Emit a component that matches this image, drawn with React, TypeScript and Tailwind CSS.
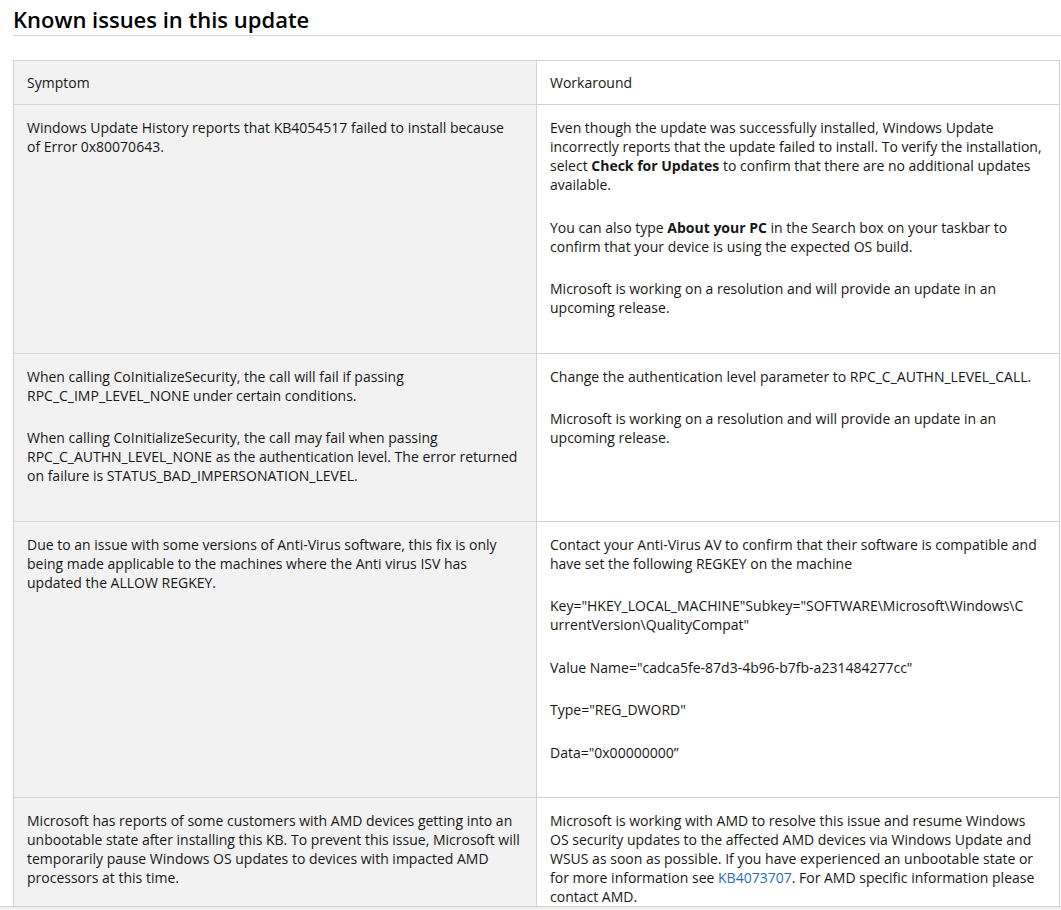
import React from 'react';

type Row = {
  symptom: React.ReactNode[];
  workaround: React.ReactNode[];
};

const rows: Row[] = [
  {
    symptom: [
      <>Windows Update History reports that KB4054517 failed to install because<br />of Error 0x80070643.</>,
    ],
    workaround: [
      <>
        Even though the update was successfully installed, Windows Update<br />
        incorrectly reports that the update failed to install. To verify the installation,<br />
        select <b className="font-bold">Check for Updates</b> to confirm that there are no additional updates<br />
        available.
      </>,
      <>
        You can also type <b className="font-bold">About your PC</b> in the Search box on your taskbar to<br />
        confirm that your device is using the expected OS build.
      </>,
      <>Microsoft is working on a resolution and will provide an update in an<br />upcoming release.</>,
    ],
  },
  {
    symptom: [
      <>When calling CoInitializeSecurity, the call will fail if passing<br />RPC_C_IMP_LEVEL_NONE under certain conditions.</>,
      <>
        When calling CoInitializeSecurity, the call may fail when passing<br />
        RPC_C_AUTHN_LEVEL_NONE as the authentication level. The error returned<br />
        on failure is STATUS_BAD_IMPERSONATION_LEVEL.
      </>,
    ],
    workaround: [
      <>Change the authentication level parameter to RPC_C_AUTHN_LEVEL_CALL.</>,
      <>Microsoft is working on a resolution and will provide an update in an<br />upcoming release.</>,
    ],
  },
  {
    symptom: [
      <>
        Due to an issue with some versions of Anti-Virus software, this fix is only<br />
        being made applicable to the machines where the Anti virus ISV has<br />
        updated the ALLOW REGKEY.
      </>,
    ],
    workaround: [
      <>Contact your Anti-Virus AV to confirm that their software is compatible and<br />have set the following REGKEY on the machine</>,
      <>Key="HKEY_LOCAL_MACHINE"Subkey="SOFTWARE\Microsoft\Windows\C<br />urrentVersion\QualityCompat"</>,
      <>Value Name="cadca5fe-87d3-4b96-b7fb-a231484277cc"</>,
      <>Type="REG_DWORD"</>,
      <>Data="0x00000000”</>,
    ],
  },
  {
    symptom: [
      <>
        Microsoft has reports of some customers with AMD devices getting into an<br />
        unbootable state after installing this KB. To prevent this issue, Microsoft will<br />
        temporarily pause Windows OS updates to devices with impacted AMD<br />
        processors at this time.
      </>,
    ],
    workaround: [
      <>
        Microsoft is working with AMD to resolve this issue and resume Windows<br />
        OS security updates to the affected AMD devices via Windows Update and<br />
        WSUS as soon as possible. If you have experienced an unbootable state or<br />
        for more information see <a href="#" className="text-[#2a6ebb]">KB4073707</a>. For AMD specific information please<br />
        contact AMD.
      </>,
    ],
  },
];

const Cell: React.FC<{ paras: React.ReactNode[]; shaded?: boolean }> = ({ paras, shaded }) => (
  <td className={`border border-[#d2d2d2] align-top pl-[13px] pr-[12px] pt-[13px] pb-[12px] ${shaded ? 'bg-[#f2f2f2]' : 'bg-white'}`}>
    {paras.map((p, i) => (
      <p key={i} className="mb-[23.5px] whitespace-nowrap">
        {p}
      </p>
    ))}
  </td>
);

export default function App() {
  return (
    <div
      className="h-[910px] flex flex-col bg-white text-[#171717] overflow-hidden"
      style={{ fontFamily: '"Open Sans", "Noto Sans", sans-serif' }}
    >
      <div className="flex-1 overflow-hidden pl-[13px]">
        <h2 className="text-[22px] font-semibold leading-[32px] pt-[3px] border-b border-[#d6d6d6] text-black">
          Known issues in this update
        </h2>
        <table className="mt-[24px] w-[1046px] table-fixed border-collapse text-[14px] leading-[19px]">
          <colgroup>
            <col className="w-[523px]" />
            <col className="w-[523px]" />
          </colgroup>
          <thead>
            <tr>
              <th className="border border-[#d2d2d2] bg-[#f2f2f2] px-[13px] py-[12px] text-left font-normal align-top">
                Symptom
              </th>
              <th className="border border-[#d2d2d2] bg-white px-[13px] py-[12px] text-left font-normal align-top">
                Workaround
              </th>
            </tr>
          </thead>
          <tbody>
            {rows.map((r, i) => (
              <tr key={i}>
                <Cell paras={r.symptom} shaded />
                <Cell paras={r.workaround} />
              </tr>
            ))}
          </tbody>
        </table>
      </div>
      <div className="h-[4px] border-t border-[#cfcfcf] bg-[#f0f0f0]" />
    </div>
  );
}
